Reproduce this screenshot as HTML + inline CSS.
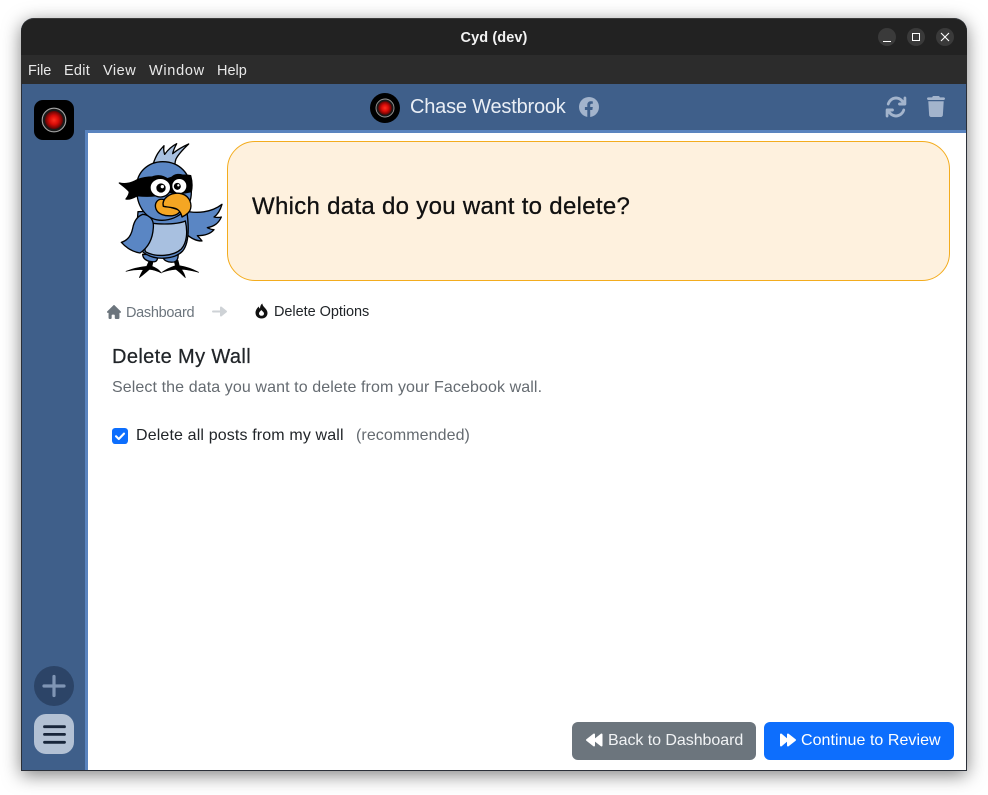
<!DOCTYPE html>
<html><head><meta charset="utf-8">
<style>
*{box-sizing:border-box}
html,body{margin:0;padding:0;width:988px;height:795px;overflow:hidden;background:#fff;font-family:"Liberation Sans","DejaVu Sans",sans-serif}
.a{position:absolute;white-space:nowrap;line-height:1}
#win{position:absolute;left:21px;top:18px;width:946px;height:753px;border-radius:13px 13px 0 0;box-shadow:0 4px 18px rgba(0,0,0,.5);background:#3f5f8a}
#title{position:absolute;left:0;top:0;width:946px;height:37px;background:#222;border-radius:13px 13px 0 0;border-top:1px solid #3a3a3a}
#menu{position:absolute;left:0;top:37px;width:946px;height:29px;background:#2c2c2c}
.m{position:absolute;top:9px;font-size:14.5px;line-height:1;color:#e8e8e8}
.wb{position:absolute;top:9px;width:18px;height:18px;border-radius:50%;background:#3a3a3a}
</style></head><body>
<div id="win">
<div id="title">
<div class="a" style="left:0;width:946px;text-align:center;top:12px;font-size:14.5px;font-weight:bold;color:#f2f2f2;letter-spacing:.1px">Cyd (dev)</div>
<div class="wb" style="left:857px"><svg width="18" height="18"><path d="M5 13.500h8" stroke="#fff" stroke-width="1"/></svg></div>
<div class="wb" style="left:886px"><svg width="18" height="18"><rect x="5.500" y="5.500" width="7" height="7" fill="none" stroke="#fff" stroke-width="1"/></svg></div>
<div class="wb" style="left:915px"><svg width="18" height="18"><path d="M5 5l8 8M13 5l-8 8" stroke="#fff" stroke-width="1.100"/></svg></div>
</div>
<div id="menu">
<span class="m" style="left:7px">File</span><span class="m" style="left:43px;letter-spacing:.25px">Edit</span><span class="m" style="left:82px;letter-spacing:.5px">View</span><span class="m" style="left:128px;letter-spacing:.7px">Window</span><span class="m" style="left:196px">Help</span>
</div>
</div>

<!-- Main content panel -->
<div style="position:absolute;left:85px;top:130px;width:881px;height:640px;background:#fff;border-left:3px solid #5a84bf;border-top:3px solid #5a84bf"></div>
<div style="position:absolute;left:21px;top:770px;width:946px;height:1px;background:#2a2f38"></div>
<div style="position:absolute;left:966px;top:84px;width:1px;height:687px;background:#2a2f38"></div>
<div style="position:absolute;left:21px;top:84px;width:1px;height:687px;background:#2a2f38"></div>

<!-- Sidebar -->
<svg style="position:absolute;left:34px;top:100px" width="40" height="40" viewBox="0 0 40 40">
<defs><radialGradient id="r1"><stop offset="0" stop-color="#ff3020"/><stop offset=".5" stop-color="#d80c08"/><stop offset="1" stop-color="#5a0504"/></radialGradient></defs>
<rect width="40" height="40" rx="9" fill="#000"/><circle cx="20" cy="20" r="11.800" fill="#1a1a1a" stroke="#a5a5a5" stroke-width="1.100"/><circle cx="20" cy="20" r="9" fill="url(#r1)"/>
</svg>
<svg style="position:absolute;left:34px;top:666px" width="40" height="40"><circle cx="20" cy="20" r="20" fill="#2c4467"/><path d="M20 10.500v19M10 20h20" stroke="#7f95b4" stroke-width="3.200" stroke-linecap="round"/></svg>
<svg style="position:absolute;left:34px;top:714px" width="40" height="40"><rect width="40" height="40" rx="12" fill="#b3c1d4"/><path d="M10.500 12.700h20M10.500 20.400h20M10.500 28.300h20" stroke="#18253a" stroke-width="2.800" stroke-linecap="round"/></svg>

<!-- Header -->
<svg style="position:absolute;left:370px;top:93px" width="30" height="30" viewBox="0 0 30 30">
<defs><radialGradient id="r2"><stop offset="0" stop-color="#ff3020"/><stop offset=".5" stop-color="#d80c08"/><stop offset="1" stop-color="#5a0504"/></radialGradient></defs>
<circle cx="15" cy="15" r="15" fill="#000"/><circle cx="15" cy="15" r="9" fill="#1a1a1a" stroke="#999" stroke-width=".9"/><circle cx="15" cy="15" r="6.800" fill="url(#r2)"/>
</svg>
<div class="a" style="left:410px;top:97px;font-size:20px;color:#e9eef5;letter-spacing:-.2px">Chase Westbrook</div>
<svg style="position:absolute;left:579px;top:97px" width="20" height="20" viewBox="0 0 20 20"><circle cx="10" cy="10" r="10" fill="#a3b4cc"/><path d="M8.300 20v-7H5.900v-3h2.400V8c0-2.500 1.400-3.800 3.600-3.800 1 0 1.900.15 1.900.15v2.400h-1.100c-1.200 0-1.500.7-1.500 1.450V10h2.600l-.45 3h-2.150v7z" fill="#3f5f8a"/></svg>
<svg style="position:absolute;left:885px;top:95px" width="22" height="24" viewBox="0 0 512 512" preserveAspectRatio="none"><path fill="#a3b4cc" d="M105.100 202.600c7.700-21.800 20.200-42.300 37.800-59.800 62.500-62.500 163.800-62.500 226.300 0l17.100 17.200H336c-17.700 0-32 14.300-32 32s14.300 32 32 32h127.900c17.700 0 32-14.300 32-32V64c0-17.700-14.300-32-32-32s-32 14.300-32 32v51.200l-17.500-17.600c-87.500-87.500-229.300-87.500-316.800 0C73.200 122 55.600 150.700 44.800 181.400c-5.900 16.700 2.900 34.900 19.500 40.800s34.900-2.900 40.800-19.500zM39 289.300c-5 1.500-9.800 4.200-13.700 8.200-4 4-6.700 8.800-8.100 14-.3 1.200-.6 2.500-.8 3.800-.3 1.700-.4 3.400-.4 5.100V448c0 17.700 14.300 32 32 32s32-14.300 32-32v-51.100l17.500 17.500c87.500 87.400 229.300 87.400 316.700 0 24.400-24.400 42.100-53.100 52.900-83.700 5.900-16.700-2.900-34.900-19.500-40.800s-34.900 2.900-40.800 19.500c-7.700 21.800-20.200 42.300-37.800 59.800-62.500 62.500-163.800 62.500-226.300 0l-.1-.1-17.100-17.100H176c17.700 0 32-14.300 32-32s-14.300-32-32-32H48.400c-1.600 0-3.200.1-4.800.3s-3.100.5-4.600 1z"/></svg>
<svg style="position:absolute;left:927px;top:96px" width="18" height="21" viewBox="0 0 448 512" preserveAspectRatio="none"><path fill="#a3b4cc" d="M135.200 17.700 128 32H32C14.300 32 0 46.300 0 64s14.300 32 32 32h384c17.700 0 32-14.300 32-32s-14.300-32-32-32h-96l-7.200-14.300C307.400 6.800 296.300 0 284.200 0H163.800c-12.100 0-23.200 6.800-28.600 17.700zM416 128H32l21.200 339c1.600 25.300 22.600 45 47.900 45h245.800c25.300 0 46.300-19.700 47.900-45L416 128z"/></svg>

<!-- Bird -->
<svg style="position:absolute;left:100px;top:135px" width="140" height="150" viewBox="0 0 420 450">
<g stroke="#000" stroke-width="4" stroke-linejoin="round" stroke-linecap="round">
<path d="M160 85C168 62 176 48 192 32C190 44 191 50 194 58C204 44 214 34 230 26C224 37 220 46 218 56C232 44 248 35 266 27C248 44 234 60 228 72C224 82 224 92 226 104Z" fill="#a8c0e0"/>
<!-- feet -->
<path d="M78 409C100 400 122 396 140 394L148 376H160L156 394C170 399 178 406 184 414C172 408 160 404 148 403C138 412 128 420 118 428C122 418 126 410 130 404C112 403 94 405 78 409Z" fill="#000" stroke-width="2"/>
<path d="M186 412C200 402 214 396 226 392L222 376H234L238 392C258 395 278 402 296 412C276 407 258 403 244 403C250 411 254 419 256 428C246 418 238 410 228 403C214 404 200 407 186 412Z" fill="#000" stroke-width="2"/>
<path d="M128 358C128 372 144 382 164 380C172 379 174 370 172 360Z" fill="#5a86c4"/>
<path d="M188 362C188 376 204 384 222 381C232 379 236 368 234 354Z" fill="#5a86c4"/>
<!-- right wing -->
<path d="M250 226C290 238 335 232 366 208C362 222 354 238 342 246C352 248 358 248 364 246C356 264 344 274 322 278C330 282 336 284 342 284C330 298 312 302 292 302C298 308 302 312 306 318C284 318 266 306 250 288Z" fill="#5a86c4"/>
<!-- body -->
<path d="M114 230C108 300 110 342 136 356C170 378 226 372 248 348C266 326 268 280 260 225Z" fill="#5a86c4"/>
<path d="M134 258C158 270 228 270 256 258C264 292 260 324 244 342C220 364 168 368 136 350C130 320 128 290 134 258Z" fill="#a8c0e0"/>
<!-- left wing -->
<path d="M128 238C150 240 162 254 160 278C158 312 144 338 120 354C98 350 78 338 64 322C84 316 94 300 98 280C102 258 112 244 128 238Z" fill="#5a86c4"/>
<!-- head -->
<path d="M110 155C110 110 146 80 188 80C238 80 274 116 274 172C274 216 240 254 186 256C138 256 108 214 110 155Z" fill="#5a86c4"/>
<!-- mask -->
<path d="M58 144C74 148 92 146 112 134C146 122 180 126 200 132C224 122 252 118 272 122C277 140 277 156 274 170C252 176 226 176 210 172C190 182 150 186 112 182C98 190 88 194 78 192C86 182 88 176 88 170C80 160 68 152 58 144Z" fill="#000"/>
<ellipse cx="181" cy="158" rx="31" ry="28" fill="#fff"/>
<ellipse cx="238" cy="153" rx="23" ry="23" fill="#fff"/>
<circle cx="183" cy="159" r="14" fill="#000" stroke="none"/><circle cx="187" cy="155" r="5" fill="#fff" stroke="none"/>
<circle cx="232" cy="154" r="10.500" fill="#000" stroke="none"/><circle cx="235" cy="151" r="3.500" fill="#fff" stroke="none"/>
<path d="M150 132C164 120 186 120 204 134" fill="none" stroke-width="6"/>
<path d="M214 130C224 118 240 116 258 126" fill="none" stroke-width="6"/>
<!-- beak -->
<path d="M192 194C172 188 162 206 168 222C174 238 194 244 218 242C232 240 238 234 242 226L194 212Z" fill="#f5a623"/>
<path d="M190 214C184 190 212 172 238 175C264 178 276 200 272 220C270 232 258 240 246 246C244 234 236 222 222 219C210 216 198 216 190 214Z" fill="#f5a623"/>
</g>
</svg>

<!-- Bubble -->
<div style="position:absolute;left:227px;top:141px;width:723px;height:140px;background:#fef1de;border:1px solid #f3ac1e;border-radius:28px"></div>
<div class="a" style="left:252px;top:195px;font-size:24px;color:#111;letter-spacing:.3px;-webkit-text-stroke:.3px #111">Which data do you want to delete?</div>

<!-- Breadcrumbs -->
<svg style="position:absolute;left:107px;top:305px" width="14" height="14" viewBox="0 0 576 512" preserveAspectRatio="none"><path fill="#6c757d" d="M575.800 255.500c0 18-15 32.100-32 32.100h-32l.7 160.200c0 2.700-.2 5.400-.5 8.100V472c0 22.100-17.900 40-40 40H360c-22.100 0-40-17.900-40-40v-88c0-17.700-14.300-32-32-32h-64c-17.700 0-32 14.300-32 32v88c0 22.100-17.900 40-40 40H104c-22.100 0-40-17.900-40-40V287.600H32c-18 0-32-14-32-32.100 0-9 3-17 10-24L266.400 8c7-7 15-8 22-8s15 2 21 7l255.400 224.500c8 7 12 15 11 24z"/></svg>
<div class="a" style="left:126px;top:306px;font-size:14.500px;color:#6c757d;letter-spacing:-.3px">Dashboard</div>
<svg style="position:absolute;left:212px;top:305px" width="16" height="13" viewBox="0 0 16 13"><path d="M1 6.500h10M9 2.500l5 4-5 4z" fill="#ced2d6" stroke="#ced2d6" stroke-width="2" stroke-linejoin="round" stroke-linecap="round"/></svg>
<svg style="position:absolute;left:255px;top:303px" width="13" height="16" viewBox="0 0 13 16"><path d="M6.500 15.500C2.800 15.500 .5 13 .5 9.800.5 7 2.400 5 3.600 3.500c.3.900.8 1.600 1.400 2.100C5 3.500 5.800 1.500 7.300.5c.2 2 1.400 3 2.800 4.600 1.300 1.500 2.400 2.900 2.400 4.900 0 3.200-2.500 5.500-6 5.500z" fill="#111"/><path d="M6.500 12.800c-1.500 0-2.500-1-2.500-2.400 0-1.300 1.200-2.100 2.400-3.400.5 1 2.600 2 2.600 3.600 0 1.300-1 2.200-2.500 2.200z" fill="#fff"/></svg>
<div class="a" style="left:274px;top:305px;font-size:14.500px;color:#212529;letter-spacing:-.05px">Delete Options</div>

<!-- Content -->
<div class="a" style="left:112px;top:347px;font-size:20px;color:#212529;letter-spacing:.38px;-webkit-text-stroke:.25px #212529">Delete My Wall</div>
<div class="a" style="left:112px;top:380px;font-size:16px;color:#656b71;letter-spacing:.1px">Select the data you want to delete from your Facebook wall.</div>
<svg style="position:absolute;left:112px;top:428px" width="16" height="16" viewBox="0 0 16 16"><rect width="16" height="16" rx="3.200" fill="#0d6efd"/><path d="M4 8.300l2.800 2.700L12 5.600" fill="none" stroke="#fff" stroke-width="2.100" stroke-linecap="round" stroke-linejoin="round"/></svg>
<div class="a" style="left:136px;top:428px;font-size:16px;color:#212529;letter-spacing:.14px">Delete all posts from my wall</div>
<div class="a" style="left:356px;top:428px;font-size:16px;color:#656b71;letter-spacing:.08px">(recommended)</div>

<!-- Buttons -->
<div style="position:absolute;left:572px;top:722px;width:184px;height:38px;background:#6c757d;border-radius:6px"></div>
<svg style="position:absolute;left:585px;top:732px" width="18" height="16" viewBox="0 0 18 16"><path d="M9 2.500v11L2 8zM16.500 2.500v11L9.500 8z" fill="#fff" stroke="#fff" stroke-width="2" stroke-linejoin="round"/></svg>
<div class="a" style="left:608px;top:733px;font-size:16px;color:#f1f3f5;letter-spacing:-.05px">Back to Dashboard</div>
<div style="position:absolute;left:764px;top:722px;width:190px;height:38px;background:#0d6efd;border-radius:6px"></div>
<svg style="position:absolute;left:779px;top:732px" width="18" height="16" viewBox="0 0 18 16"><path d="M2 2.500v11L8.500 8zM9 2.500v11L16 8z" fill="#fff" stroke="#fff" stroke-width="2" stroke-linejoin="round"/></svg>
<div class="a" style="left:801px;top:733px;font-size:16px;color:#fff;letter-spacing:.05px">Continue to Review</div>
</body></html>
